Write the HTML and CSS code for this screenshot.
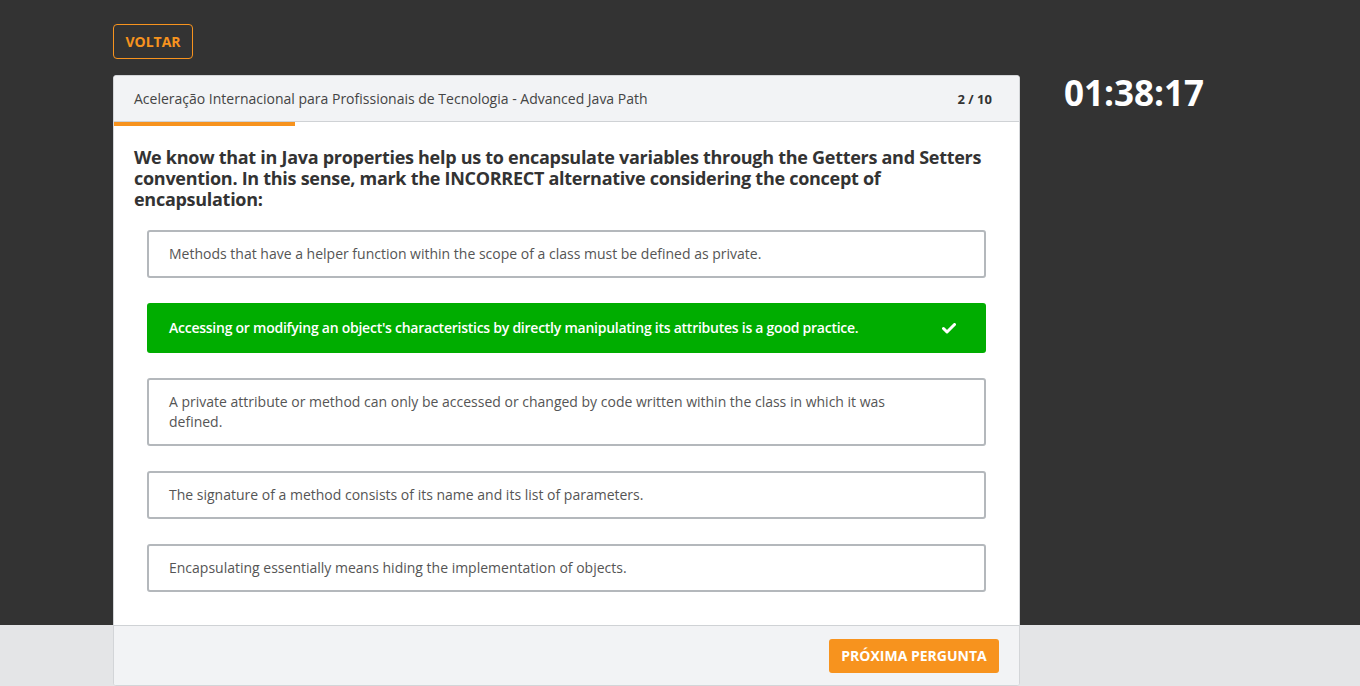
FILE: index.html
```html
<!DOCTYPE html>
<html lang="pt">
<head>
<meta charset="utf-8">
<link rel="stylesheet" href="styles.css">
</head>
<body>
<div class="page">
  <div class="container">
    <div class="top">
      <button class="btn-back">VOLTAR</button>
    </div>
    <div class="main">
      <div class="card">
        <div class="card-head">
          <span class="course">Aceleração Internacional para Profissionais de Tecnologia - Advanced Java Path</span>
          <span class="count">2 / 10</span>
        </div>
        <div class="progress"><div class="progress-fill" style="width:20%"></div></div>
        <div class="card-body">
          <h1 class="question">We know that in Java properties help us to encapsulate variables through the Getters and Setters convention. In this sense, mark the INCORRECT alternative considering the concept of encapsulation:</h1>
          <ul class="options">
            <li class="option">Methods that have a helper function within the scope of a class must be defined as private.</li>
            <li class="option selected"><span>Accessing or modifying an object's characteristics by directly manipulating its attributes is a good practice.</span>
              <svg class="check" width="14" height="11" viewBox="0 0 14 11"><path d="M1.5 5.5 L5 9 L12.5 1.5" fill="none" stroke="#fff" stroke-width="3" stroke-linecap="round" stroke-linejoin="round"/></svg>
            </li>
            <li class="option">A private attribute or method can only be accessed or changed by code written within the class in which it was defined.</li>
            <li class="option">The signature of a method consists of its name and its list of parameters.</li>
            <li class="option">Encapsulating essentially means hiding the implementation of objects.</li>
          </ul>
        </div>
        <div class="card-foot">
          <button class="btn-next">PRÓXIMA PERGUNTA</button>
        </div>
      </div>
      <div class="timer">01:38:17</div>
    </div>
  </div>
</div>
</body>
</html>
```
FILE: styles.css
```css
* { box-sizing: border-box; }
html, body { margin: 0; padding: 0; }
body {
  font-family: "Open Sans", "Liberation Sans", sans-serif;
  background: #e4e5e7;
  color: #333;
}
.page {
  background: linear-gradient(#333333 0, #333333 625px, #e4e5e7 625px);
  min-height: 686px;
}
.container {
  padding-left: 113px;
  padding-top: 24px;
}
.top { height: 51px; }
.btn-back {
  height: 35px;
  width: 80px;
  background: transparent;
  border: 1px solid #f7931e;
  border-radius: 4px;
  color: #f7931e;
  font-family: "Open Sans", sans-serif;
  font-weight: 700;
  font-size: 14px;
  padding: 0;
}
.main {
  display: flex;
  align-items: flex-start;
}
.card {
  width: 907px;
  background: #fff;
  border: 1px solid #d3d5d8;
  border-radius: 3px;
  overflow: hidden;
}
.card-head {
  height: 46px;
  background: #f2f3f5;
  border-bottom: 1px solid #cfd2d5;
  display: flex;
  align-items: center;
  justify-content: space-between;
  padding: 0 27px 0 20px;
  font-size: 14px;
  color: #444;
}
.count { font-weight: 700; color: #333; font-size: 13px; }
.progress { height: 4px; }
.progress-fill { height: 4px; background: #f7931e; }
.card-body {
  padding: 21px 20px 33px 20px;
}
.question {
  margin: 0 0 20px;
  font-size: 18px;
  line-height: 21px;
  font-weight: 700;
  letter-spacing: -0.28px;
  color: #333;
}
.options {
  list-style: none;
  margin: 0;
  padding: 0 13px;
  display: flex;
  flex-direction: column;
  gap: 25px;
}
.option {
  border: 2px solid #b4b8bc;
  border-radius: 3px;
  padding: 12px 80px 12px 20px;
  font-size: 14px;
  line-height: 20px;
  color: #555;
}
.option.selected {
  background: #00ad00;
  border: none;
  color: #fff;
  font-weight: 600;
  letter-spacing: -0.25px;
  padding: 15px 30px 15px 22px;
  display: flex;
  align-items: center;
  justify-content: space-between;
}
.check { flex: none; }
.card-foot {
  height: 60px;
  background: #f2f3f5;
  border-top: 1px solid #cfd2d5;
  display: flex;
  align-items: center;
  justify-content: flex-end;
  padding-right: 20px;
}
.btn-next {
  height: 34px;
  width: 170px;
  background: #f7931e;
  border: none;
  border-radius: 3px;
  color: #fff;
  font-family: "Open Sans", sans-serif;
  font-weight: 700;
  font-size: 14px;
  padding: 0;
}
.timer {
  margin-left: 44px;
  color: #fff;
  font-size: 35px;
  font-weight: 700;
  line-height: 36px;
  margin-top: 0;
}
```
